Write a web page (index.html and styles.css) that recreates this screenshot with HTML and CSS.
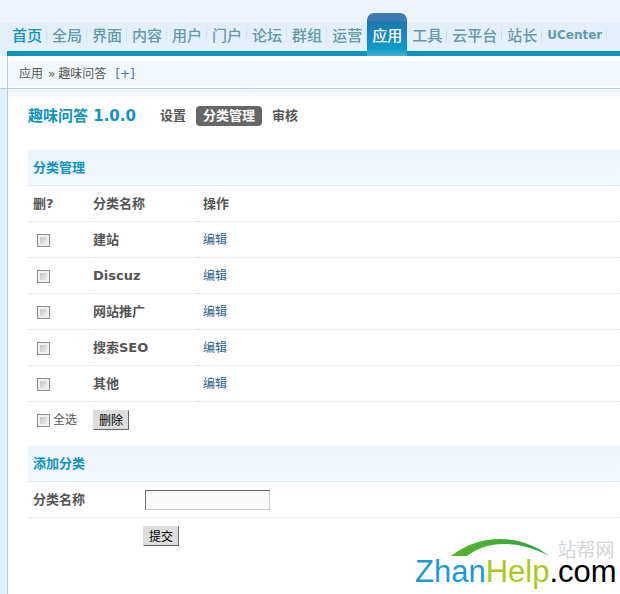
FILE: index.html
```html
<!DOCTYPE html>
<html lang="zh-CN">
<head>
<meta charset="utf-8">
<title>趣味问答</title>
<link rel="stylesheet" href="styles.css">
</head>
<body>
<header class="top">
  <nav class="nav">
    <a class="nav-item first" href="#">首页</a>
    <a class="nav-item" href="#">全局</a>
    <a class="nav-item" href="#">界面</a>
    <a class="nav-item" href="#">内容</a>
    <a class="nav-item" href="#">用户</a>
    <a class="nav-item" href="#">门户</a>
    <a class="nav-item" href="#">论坛</a>
    <a class="nav-item" href="#">群组</a>
    <a class="nav-item" href="#">运营</a>
    <a class="nav-item active" href="#">应用</a>
    <a class="nav-item" href="#">工具</a>
    <a class="nav-item" href="#">云平台</a>
    <a class="nav-item" href="#">站长</a>
    <a class="nav-item latin" href="#">UCenter</a>
  </nav>
</header>
<div class="frame">
  <div class="crumbs">应用<span class="sep">»</span>趣味问答<a class="add" href="#">[+]</a></div>
  <main class="content">
    <div class="title-row">
      <h1>趣味问答 1.0.0</h1>
      <a class="tab" href="#">设置</a>
      <a class="tab current" href="#">分类管理</a>
      <a class="tab" href="#">审核</a>
    </div>
    <form>
      <table class="grid">
        <colgroup><col class="col-check"><col class="col-name"><col></colgroup>
        <thead>
          <tr><th class="section" colspan="3">分类管理</th></tr>
          <tr><th>删?</th><th>分类名称</th><th>操作</th></tr>
        </thead>
        <tbody>
          <tr><td><input type="checkbox" aria-label="建站"></td><td class="name">建站</td><td><a href="#">编辑</a></td></tr>
          <tr><td><input type="checkbox" aria-label="Discuz"></td><td class="name">Discuz</td><td><a href="#">编辑</a></td></tr>
          <tr><td><input type="checkbox" aria-label="网站推广"></td><td class="name">网站推广</td><td><a href="#">编辑</a></td></tr>
          <tr><td><input type="checkbox" aria-label="搜索SEO"></td><td class="name">搜索SEO</td><td><a href="#">编辑</a></td></tr>
          <tr><td><input type="checkbox" aria-label="其他"></td><td class="name">其他</td><td><a href="#">编辑</a></td></tr>
        </tbody>
      </table>
      <div class="actions">
        <label class="all"><input type="checkbox">全选</label>
        <button type="button">删除</button>
      </div>
    </form>
    <form>
      <h2 class="section">添加分类</h2>
      <div class="field">
        <label class="field-label" for="name">分类名称</label>
        <input class="text" id="name" type="text">
      </div>
      <div class="submit"><button type="button">提交</button></div>
    </form>
  </main>
</div>
<div class="logo">
  <svg class="arc" viewBox="0 0 98 18" aria-hidden="true">
    <defs><linearGradient id="leaf"><stop offset="0" stop-color="#5ab52d"/><stop offset="1" stop-color="#27a541"/></linearGradient></defs>
    <path fill="url(#leaf)" d="M0 17C16 5 32 0 49 0C69 0 86 7 98 17C82 9 68 5 53 5C38 5 27 9 16 17Z"/>
  </svg>
  <span class="logo-cn">站帮网</span>
  <span class="logo-name"><span class="blue">Zhan</span><span class="green">Help</span>.com</span>
</div>
</body>
</html>
```

FILE: styles.css
```css
* { box-sizing: border-box; }
body {
  margin: 0;
  min-height: 100vh;
  position: relative;
  display: flex;
  flex-direction: column;
  overflow-x: hidden;
  background: linear-gradient(#f2f8fc 88px, #b5cfd9 88px 89px, #def0fb 89px);
  color: #555;
  font: 12px/18px "DejaVu Sans", "Noto Sans CJK SC", sans-serif;
}
a { color: #2b6490; text-decoration: none; }

.top {
  padding: 13px 0 0 7px;
  background: linear-gradient(#edf4fb 22px, #e2effa 23px, #e2f2fc);
}
.nav {
  display: flex;
  background: linear-gradient(#0e93bf, #0e93bf) bottom / 100% 5px no-repeat;
}
.nav-item {
  height: 43px;
  padding: 11px 5px 0;
  flex: none;
  color: #6499a9;
  font: 500 15px/22px "Noto Sans CJK SC", sans-serif;
  background: linear-gradient(#e2effa, #c9dce6, #e2effa) right 12px / 1px 20px no-repeat;
}
.nav-item.first { color: #0e93bf; }
.nav-item.active {
  color: #fff;
  border-radius: 7px 7px 0 0;
  background: linear-gradient(#3b7cb5 8px, #1b78b5 9px, #0e9bc8 36px, #48b3d4);
}
.nav-item.latin { font: bold 12px/22px "DejaVu Sans", sans-serif; }

.frame {
  flex: 1;
  margin-left: 7px;
  border-left: 1px solid #b5cfd9;
  background: #fff;
}
.crumbs {
  height: 32px;
  padding: 4px 11px 0;
  border: solid #fff;
  border-width: 5px 0 2px;
  background: #f2f8fb;
  box-shadow: 0 1px #b5cfd9;
}
.sep { margin: 0 3px 0 5px; }
.add { margin-left: 9px; color: #3f73b5; }

.content {
  margin-top: 1px;
  padding: 17px 0 0 20px;
  background: linear-gradient(#eaf3fc, #fff) top / 100% 10px no-repeat;
}
.title-row { display: flex; align-items: center; height: 20px; margin-bottom: 24px; }
h1 {
  margin: 0 17px 0 0;
  color: #0e93bf;
  font-size: 15px;
  line-height: 20px;
}
.tab {
  margin-right: 3px;
  padding: 0 7px;
  border-radius: 4px;
  color: #555;
  font-size: 13px;
  font-weight: bold;
  line-height: 20px;
}
.tab.current { background: #666; color: #fff; }

.grid { width: 100%; border-spacing: 0; table-layout: fixed; }
.grid th, .grid td {
  height: 36px;
  padding: 1px 5px 0;
  border-bottom: 1px dotted #d5e4ea;
  text-align: left;
}
.grid th, .name { font-size: 13px; font-weight: bold; }
.col-check { width: 60px; }
.col-name { width: 110px; }
.section, .grid .section {
  height: 36px;
  margin: 0;
  padding: 0 5px;
  border-bottom: 1px dotted #d5e4ea;
  background: linear-gradient(#ecf5fb, #f3f8fe);
  color: #0e93bf;
  font-size: 13px;
  line-height: 35px;
}

input[type="checkbox"] {
  appearance: none;
  display: block;
  width: 13px;
  height: 13px;
  margin: 0 4px;
  border: 1px solid #8e8f8f;
  background: linear-gradient(135deg, #b4b8c0, #fafafa);
  box-shadow: inset 0 0 0 2px #f0f0f0;
}
.actions { display: flex; align-items: center; height: 44px; padding: 0 5px 8px; }
.all { display: flex; align-items: center; width: 60px; }
.all input[type="checkbox"] { margin-right: 3px; }
button {
  width: 36px;
  height: 20px;
  padding: 0;
  border: 1px solid;
  border-color: #ddd #666 #666 #ddd;
  background: #ddd;
  color: #000;
  font: 12px/18px "Noto Sans CJK SC", sans-serif;
}
.field { display: flex; align-items: center; height: 36px; padding: 0 5px; border-bottom: 1px dotted #d5e4ea; }
.field-label { width: 112px; font-size: 13px; font-weight: bold; }
.text {
  width: 125px;
  height: 20px;
  border: 1px solid;
  border-color: #666 #ccc #ccc #666;
  background: #f9f9f9;
}
.submit { padding: 8px 115px; }

.logo {
  position: absolute;
  right: 4px;
  bottom: 9px;
  display: grid;
  grid-template-columns: 135px auto;
  width: 201px;
}
.arc { width: 98px; height: 18px; margin-left: 36px; }
.logo-cn {
  justify-self: end;
  margin-right: 2px;
  color: #d2d5d8;
  font: 19px/20px "Noto Sans CJK SC", sans-serif;
}
.logo-name {
  grid-column: 1 / 3;
  color: #000;
  font: 31px/26px "Liberation Sans", sans-serif;
}
.blue { color: #1c9ad6; }
.green { color: #a9ca1c; }
```
